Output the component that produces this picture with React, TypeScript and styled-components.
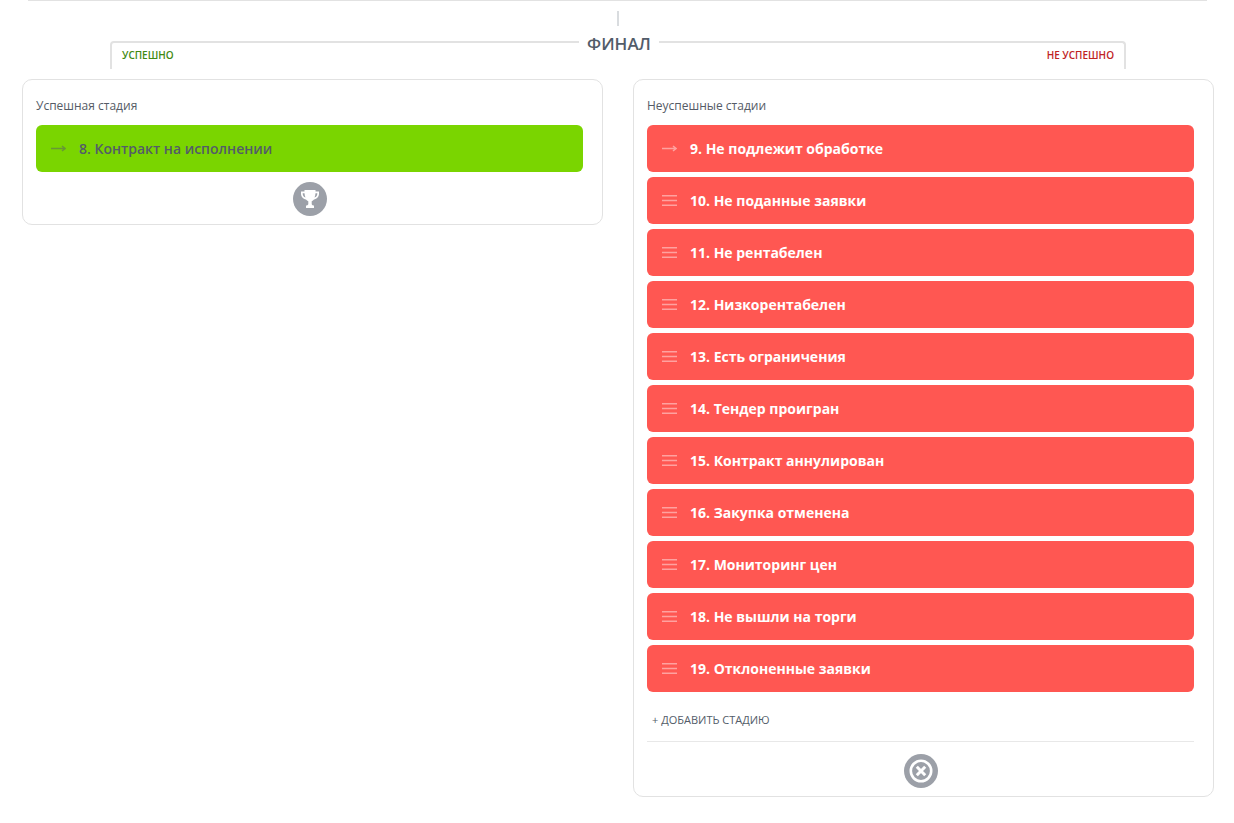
import React from "react";
import styled, { createGlobalStyle } from "styled-components";

const Global = createGlobalStyle`
  html, body { margin: 0; padding: 0; background: #fff; }
  body { font-family: "Open Sans", "Noto Sans", sans-serif; }
`;

const Page = styled.div`
  width: 1234px;
  height: 823px;
  box-sizing: border-box;
  overflow: hidden;
`;
const TopRule = styled.div`
  height: 1px;
  margin: 0 27px 0 28px;
  background: #e2e2e2;
`;
const Tick = styled.div`
  width: 2px;
  height: 15px;
  margin: 10px 0 0 617px;
  background: #d9dcdf;
`;
const Bracket = styled.div`
  position: relative;
  box-sizing: border-box;
  height: 28px;
  margin: 15px 108px 0 110px;
  padding: 5px 10px 0;
  display: flex;
  justify-content: space-between;
  align-items: flex-start;
  border: 2px solid #e2e2e2;
  border-bottom: 0;
  border-radius: 4px 4px 0 0;
`;
const Title = styled.div`
  position: absolute;
  top: -11px;
  left: 467px;
  width: 80px;
  text-align: center;
  background: #fff;
  font-size: 17px;
  line-height: 23px;
  font-weight: 600;
  color: #525c69;
`;
const Outcome = styled.span<{ $color: string }>`
  font-size: 10px;
  line-height: 14px;
  font-weight: 600;
  color: ${(p) => p.$color};
`;
const Columns = styled.div`
  display: grid;
  grid-template-columns: 581px 581px;
  gap: 30px;
  align-items: start;
  margin: 10px 20px 0 22px;
`;
const Card = styled.section`
  box-sizing: border-box;
  padding: 15px 19px 8px 13px;
  border: 1px solid #e2e2e2;
  border-radius: 10px;
  background: #fff;
`;
const CardTitle = styled.div`
  font-size: 12px;
  line-height: 22px;
  color: #555b66;
  margin-bottom: 8px;
`;
const Stages = styled.div`
  display: flex;
  flex-direction: column;
  gap: 5px;
`;
const Stage = styled.div<{ $bg: string; $fg: string; $weight: number }>`
  display: flex;
  align-items: center;
  height: 47px;
  padding-left: 15px;
  border-radius: 6px;
  background: ${(p) => p.$bg};
  color: ${(p) => p.$fg};
  font-size: 14px;
  font-weight: ${(p) => p.$weight};
`;
const StageIcon = styled.svg`
  width: 15px;
  height: 11px;
  margin-right: 13px;
  flex: none;
`;
const AddRow = styled.div`
  height: 50px;
  box-sizing: border-box;
  padding: 18px 0 0 5px;
  border-bottom: 1px solid #e8e8e8;
  font-size: 11px;
  line-height: 20px;
  color: #535c69;
  text-transform: uppercase;
`;
const BadgeRow = styled.div<{ $top: number }>`
  display: flex;
  justify-content: center;
  padding-top: ${(p) => p.$top}px;
`;
const Badge = styled.div`
  width: 34px;
  height: 34px;
  border-radius: 50%;
  background: #9ca0a8;
  display: flex;
  align-items: center;
  justify-content: center;
`;

const Arrow = ({ color }: { color: string }) => (
  <StageIcon viewBox="0 0 15 11">
    <path d="M0 5.5h13.5M11 3l3 2.5-3 2.5" fill="none" stroke={color} strokeWidth="1.5" />
  </StageIcon>
);
const Bars = () => (
  <StageIcon viewBox="0 0 15 11">
    <path d="M0 .75h15M0 5.5h15M0 10.25h15" fill="none" stroke="rgba(255,255,255,.45)" strokeWidth="1.5" />
  </StageIcon>
);
const Trophy = () => (
  <svg width="20" height="20" viewBox="0 0 20 20">
    <path
      d="M4.5 1h11v1.5H19v2.2c0 3-2.2 5.3-5 5.8-.6.8-1.4 1.4-2.3 1.7V15c0 .9.8 1.5 2.3 1.6V19H6v-2.4c1.5-.1 2.3-.7 2.3-1.6v-2.8c-.9-.3-1.7-.9-2.3-1.7-2.800-.5-5-2.800-5-5.800V2.500h3.500V1zM2.700 4.200v.5c0 1.800 1.200 3.300 2.800 3.900-.5-1.200-.9-2.700-1-4.400H2.700zm14.600 0h-1.800c-.1 1.700-.5 3.200-1 4.400 1.600-.6 2.800-2.100 2.800-3.900v-.5z"
      fill="#fff"
      fillRule="evenodd"
    />
  </svg>
);
const CloseRing = () => (
  <svg width="24" height="24" viewBox="0 0 24 24">
    <circle cx="12" cy="12" r="10.2" fill="none" stroke="#fff" strokeWidth="2.600" />
    <path d="M7.800 7.800l8.400 8.400M16.200 7.800l-8.400 8.400" fill="none" stroke="#fff" strokeWidth="3" />
  </svg>
);

const failed = [
  "10. Не поданные заявки",
  "11. Не рентабелен",
  "12. Низкорентабелен",
  "13. Есть ограничения",
  "14. Тендер проигран",
  "15. Контракт аннулирован",
  "16. Закупка отменена",
  "17. Мониторинг цен",
  "18. Не вышли на торги",
  "19. Отклоненные заявки",
];

export default function App() {
  return (
    <Page>
      <Global />
      <TopRule />
      <Tick />
      <Bracket>
        <Title>ФИНАЛ</Title>
        <Outcome $color="#3f8a12">УСПЕШНО</Outcome>
        <Outcome $color="#c0231f">НЕ УСПЕШНО</Outcome>
      </Bracket>
      <Columns>
        <Card>
          <CardTitle>Успешная стадия</CardTitle>
          <Stages>
            <Stage $bg="#7ad500" $fg="#535c69" $weight={600}>
              <Arrow color="rgba(83,92,105,.5)" />
              8. Контракт на исполнении
            </Stage>
          </Stages>
          <BadgeRow $top={10}>
            <Badge>
              <Trophy />
            </Badge>
          </BadgeRow>
        </Card>
        <Card>
          <CardTitle>Неуспешные стадии</CardTitle>
          <Stages>
            <Stage $bg="#ff5752" $fg="#fff" $weight={700}>
              <Arrow color="rgba(255,255,255,.45)" />
              9. Не подлежит обработке
            </Stage>
            {failed.map((name) => (
              <Stage key={name} $bg="#ff5752" $fg="#fff" $weight={700}>
                <Bars />
                {name}
              </Stage>
            ))}
          </Stages>
          <AddRow>+ Добавить стадию</AddRow>
          <BadgeRow $top={12}>
            <Badge>
              <CloseRing />
            </Badge>
          </BadgeRow>
        </Card>
      </Columns>
    </Page>
  );
}
